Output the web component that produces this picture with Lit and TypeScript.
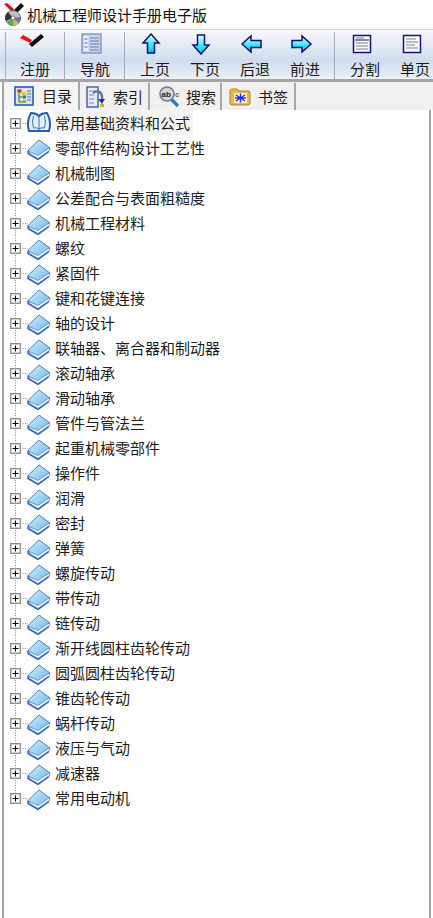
import { LitElement, html, css, svg } from "lit";
import { customElement } from "lit/decorators.js";

const ROWS = ["常用基础资料和公式","零部件结构设计工艺性","机械制图","公差配合与表面粗糙度","机械工程材料","螺纹","紧固件","键和花键连接","轴的设计","联轴器、离合器和制动器","滚动轴承","滑动轴承","管件与管法兰","起重机械零部件","操作件","润滑","密封","弹簧","螺旋传动","带传动","链传动","渐开线圆柱齿轮传动","圆弧圆柱齿轮传动","锥齿轮传动","蜗杆传动","液压与气动","减速器","常用电动机"];

const arrow = (pts: string) => svg`<svg width="22" height="22" viewBox="0 0 22 22"><defs><linearGradient id="ag" x1="0" y1="0" x2="0" y2="1"><stop offset="0" stop-color="#e8ffff"/><stop offset=".6" stop-color="#30e8f8"/><stop offset="1" stop-color="#10b8e0"/></linearGradient></defs><polygon points=${pts} fill="url(#ag)" stroke="#101070" stroke-width="1.5" stroke-linejoin="miter"/></svg>`;

const ICONS: Record<string, unknown> = {
  reg: svg`<svg width="24" height="22" viewBox="0 0 24 22"><polygon points="0,5 3,2 12,7 10,10" fill="#e8141c"/><polygon points="9,11 21,1 24,4 12,14" fill="#111"/></svg>`,
  nav: svg`<svg width="22" height="22" viewBox="0 0 22 22"><rect x="1" y="1" width="19" height="19" fill="#c6d4ec" stroke="#7f94bc" stroke-width="1.4"/><rect x="3" y="3" width="4" height="15" fill="#eef2fa"/><path d="M9 5h9M9 8h9M9 11h9M9 14h9M9 17h9" stroke="#6880ac" stroke-width="1.2"/><path d="M3.500 6h3M3.500 10h3M3.500 14h3" stroke="#7f94bc" stroke-width="1.300"/></svg>`,
  up: arrow("10,1 18,10 13.500,10 13.500,20 6.500,20 6.500,10 2,10"),
  down: arrow("6.500,2 13.500,2 13.500,12 18,12 10,21 2,12 6.500,12"),
  left: arrow("1,11 10,3 10,7.500 20,7.500 20,14.500 10,14.500 10,19"),
  right: arrow("20,11 11,3 11,7.500 1,7.500 1,14.500 11,14.500 11,19"),
  split: svg`<svg width="20" height="20" viewBox="0 0 20 20"><rect x="1.500" y="1.500" width="17" height="17" fill="#f8f8f8" stroke="#14147a" stroke-width="1.500"/><path d="M3 6h14" stroke="#14147a" stroke-width="1"/><path d="M4 4h8M4 9h12M4 12h12M4 15h12" stroke="#a8a8a8" stroke-width="1.400"/></svg>`,
  single: svg`<svg width="20" height="20" viewBox="0 0 20 20"><rect x="1.500" y="1.500" width="17" height="17" fill="#f8f8f8" stroke="#14147a" stroke-width="1.500"/><path d="M4 5h10M4 8h12M4 11h9M4 14h12" stroke="#a8a8a8" stroke-width="1.400"/></svg>`,
};

const GROUPS = [
  [{ label: "注册", icon: "reg" }],
  [{ label: "导航", icon: "nav" }],
  [{ label: "上页", icon: "up" }, { label: "下页", icon: "down" }, { label: "后退", icon: "left" }, { label: "前进", icon: "right" }],
  [{ label: "分割", icon: "split" }, { label: "单页", icon: "single" }],
];

const TAB_ICONS: Record<string, unknown> = {
  toc: svg`<svg width="20" height="20" viewBox="0 0 20 20"><rect x="1" y="1" width="18" height="18" fill="#d8e4f4" stroke="#2050a8" stroke-width="1.500"/><rect x="3.500" y="3.500" width="4" height="3" fill="#c03018"/><rect x="8" y="6" width="3.500" height="3" fill="#e8c030"/><path d="M5 7v9h4M5 11h4" stroke="#307030" stroke-width="1" fill="none"/><rect x="9" y="9.500" width="3" height="3" fill="#408040"/><rect x="9" y="14" width="3" height="3" fill="#c8a020"/><path d="M13 5h4M13 8h4M13 11h4M13 14h4" stroke="#5070a8" stroke-width="1"/></svg>`,
  idx: svg`<svg width="20" height="22" viewBox="0 0 20 22"><rect x="1" y="1" width="11" height="20" fill="#e4ecf8" stroke="#405c98" stroke-width="1.400"/><path d="M3 5h7M3 9h5M3 13h5M3 17h5" stroke="#7a8ab0" stroke-width="1.200"/><path d="M7 7c6-4 10 0 9 8" stroke="#6070a0" stroke-width="2.400" fill="none"/><polygon points="12,13 19,13 16,18" fill="#303c7c"/><rect x="14" y="18" width="4" height="3" fill="#d8b030"/></svg>`,
  find: svg`<svg width="24" height="22" viewBox="0 0 24 22"><path d="M12 12l8 8" stroke="#2c78c0" stroke-width="3.400"/><circle cx="9" cy="8" r="7" fill="#d4d4dc" stroke="#6c7c98" stroke-width="1.600"/><text x="3.500" y="11" class="ab">ab</text><text x="17" y="10.500" class="c">c</text></svg>`,
  mark: svg`<svg width="22" height="20" viewBox="0 0 22 20"><path d="M1 4q0-2 2-2h5l2 2h9q2 0 2 2v10q0 2-2 2H3q-2 0-2-2z" fill="#e8b848" stroke="#b08028" stroke-width="1"/><rect x="5" y="6" width="13" height="10" fill="#fff4c0"/><path d="M11.500 6.500v9M7 8l9 6M16 8l-9 6M6 11h11" stroke="#2030d8" stroke-width="1.300"/></svg>`,
};

const TABS = [
  { label: "目录", icon: "toc", w: 75, pad: 9, gap: 8, active: true },
  { label: "索引", icon: "idx", w: 70, pad: 6, gap: 7, active: false },
  { label: "搜索", icon: "find", w: 72, pad: 8, gap: 4, active: false },
  { label: "书签", icon: "mark", w: 74, pad: 7, gap: 7, active: false },
];

const book = svg`<polygon points="28,15.500 39,5 50,13 38,23.500" fill="url(#cover)" stroke="#4d80c8" stroke-width="1"/><polygon points="29,16.500 38,20.500 49,13 50,15 38,23.500 29,18" fill="#fff" stroke="#4d80c8" stroke-width=".8"/><path d="M28 15.500v3l10 6 11-8" fill="none" stroke="#2f60b0" stroke-width="1.400"/>`;
const openBook = svg`<path d="M31 3q-5 8-2 18h20q3-10-2-18-5 0-8 3-3-3-8-3z" fill="#e4f0fa" stroke="#2c5ca8" stroke-width="2"/><path d="M39 6v15M33.500 6q-2 6 0 12 3-1 5.500 1M44.500 6q2 6 0 12-3-1-5.500 1" fill="none" stroke="#3c6cb8" stroke-width="1"/>`;

const gutter = (first: boolean, last: boolean) => svg`<svg class="gutter" width="52" height="25" viewBox="0 0 52 25">
  <defs><linearGradient id="cover" x1="0" y1="0" x2="1" y2="1"><stop offset="0" stop-color="#d8f0fc"/><stop offset="1" stop-color="#60b4ec"/></linearGradient></defs>
  <path d="M15.500 ${first ? 13 : 0}V${last ? 13 : 25}" stroke="#8a8a8a" stroke-dasharray="1 1.500" fill="none"/>
  <path d="M20 13.500H28" stroke="#8a8a8a" stroke-dasharray="1 1.500" fill="none"/>
  <rect x="10.700" y="8.700" width="9.600" height="9.600" fill="#fff" stroke="#909090" stroke-width="1.400"/>
  <path d="M12.500 13.500h6M15.500 10.500v6" stroke="#000" stroke-width="1.100"/>
  ${first ? openBook : book}
</svg>`;

@customElement("app-root")
export class AppRoot extends LitElement {
  static styles = css`
    :host { display: block; width: 433px; height: 918px; overflow: hidden; background: #fff;
      font-family: "Noto Sans CJK SC", "Liberation Sans", sans-serif; font-size: 15px; color: #1c1c1c; }
    .title { height: 29px; display: flex; align-items: center; gap: 3px; padding-left: 3px; font-size: 15px; color: #111; }
    .toolbar { height: 53px; box-sizing: border-box; display: flex; padding-left: 5px; border-top: 1px solid #dcdcdc;
      border-bottom: 3px solid #a4a4a4; overflow: hidden;
      background: linear-gradient(#f6f8fb 0%, #e8eef7 25%, #cfdcee 62%, #dbe5f2 80%, #eef2f8 100%); }
    .group { flex: none; display: flex; box-sizing: content-box; padding: 0 4px 0 5px; margin: 2px 0 0; border-right: 1px solid #a8adb4; }
    .group:first-child { border-left: 1px solid #a8adb4; padding-left: 4px; }
    .group:last-child { border-right: none; }
    .tool { flex: none; width: 50px; display: flex; flex-direction: column; align-items: center; }
    .tool-icon { height: 24px; margin-right: 6px; display: flex; align-items: center; margin-top: 0; }
    .tool-label { line-height: 20px; margin-top: 3px; color: #1a1a1a; white-space: nowrap; }
    .tabs { height: 28px; box-sizing: border-box; display: flex; align-items: flex-end; background: #f0f0f0; margin-left: 2px; padding-left: 1px;
      border-left: 2px solid #a4a4a4; }
    .tab { flex: none; box-sizing: border-box; height: 27px; display: flex; align-items: center; border-right: 2px solid #a8a8a8; }
    .tab.active { height: 28px; background: #f4f4f4; }
    .tab-label { line-height: 20px; }
    .ab { font: bold 8px "Liberation Sans", sans-serif; fill: #222; }
    .c { font: bold 8px "Liberation Sans", sans-serif; fill: #666; }
    .pane { height: 808px; box-sizing: border-box; margin: 0 2px; border-left: 2px solid #a4a4a4; border-right: 2px solid #a4a4a4; background: #fff; }
    .row { height: 25px; display: flex; align-items: center; margin-left: -4px; }
    .gutter { flex: none; }
    .text { line-height: 25px; padding: 0 3px; white-space: nowrap; }
    .row:first-child .text { background: #f4f4f4; }
  `;

  render() {
    return html`
      <div class="title">
        <svg width="21" height="23" viewBox="0 0 21 23">
          <polygon points="1,1 4,0 11,6 9,9" fill="#e01018"/>
          <polygon points="9,9 18,0 21,3 12,12" fill="#111"/>
          <circle cx="10" cy="15" r="7.500" fill="#b8c4c0" stroke="#555" stroke-width=".8"/>
          <path d="M10 15L5 9A7.500 7.500 0 0 0 3 18z" fill="#333"/>
          <path d="M10 15L4 19A7.500 7.500 0 0 0 10 22.500z" fill="#50b050"/>
          <path d="M10 15L10 22.500A7.500 7.500 0 0 0 16 20z" fill="#c0c040"/>
          <path d="M10 15L16 20A7.500 7.500 0 0 0 17.500 14z" fill="#8060c0"/>
          <circle cx="10" cy="15" r="2" fill="#fff" stroke="#333" stroke-width=".6"/>
        </svg>
        <span>机械工程师设计手册电子版</span>
      </div>
      <div class="toolbar">
        ${GROUPS.map((g) => html`<div class="group">
          ${g.map((t) => html`<div class="tool">
            <div class="tool-icon">${ICONS[t.icon]}</div>
            <div class="tool-label">${t.label}</div>
          </div>`)}
        </div>`)}
      </div>
      <div class="tabs">
        ${TABS.map((t) => html`
          <div class="tab ${t.active ? "active" : ""}" style="width:${t.w}px;padding-left:${t.pad}px;gap:${t.gap}px">
            ${TAB_ICONS[t.icon]}<span class="tab-label">${t.label}</span>
          </div>`)}
      </div>
      <div class="pane">
        ${ROWS.map((r, i) => html`
          <div class="row">${gutter(i === 0, i === ROWS.length - 1)}<span class="text">${r}</span></div>`)}
      </div>
    `;
  }
}
